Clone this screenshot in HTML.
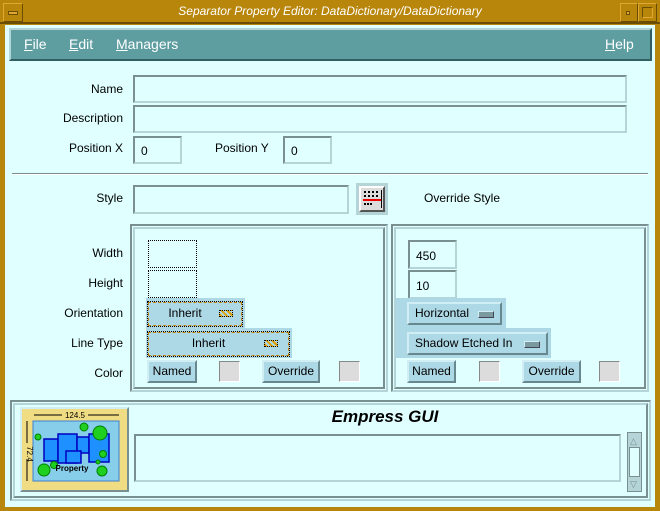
<!DOCTYPE html>
<html><head><style>
*{margin:0;padding:0;box-sizing:border-box}
body{width:660px;height:511px;background:#b8860b;position:relative;overflow:hidden;font-family:"Liberation Sans",sans-serif;font-size:12px;color:#000}
.a{position:absolute}
.lbl{position:absolute;text-align:right;width:120px;left:3px;font-size:12px}
.in{position:absolute;background:#e0ffff;border:2px solid;border-color:#7a8f8f #b4d4d8 #b4d4d8 #7a8f8f}
.btn{position:absolute;background:#add8e6;border:2px solid;border-color:#d0eef4 #688890 #688890 #d0eef4;text-align:center;font-size:12px;line-height:18px}
.sq{position:absolute;width:21px;height:21px;background:#dcdcdc;border:1px solid;border-color:#888 #fff #fff #888}
.dot{position:absolute;border:1px dotted #000;background:#e0ffff}
.grp{position:absolute;border:2px solid;border-color:#7a8f8f #b4d4d8 #b4d4d8 #7a8f8f}
.grp>div{position:absolute;inset:1px;border:2px solid;border-color:#b4d4d8 #7a8f8f #7a8f8f #b4d4d8}
.ind{position:absolute;width:16px;height:7px;border:1px solid;border-color:#d0eef4 #445 #445 #d0eef4;background:#7a9aa0}
.hatch{position:absolute;width:14px;height:7px;border:1px dotted #000;background:repeating-linear-gradient(45deg,#e0a000 0 2px,#add8e6 2px 4px)}
</style></head><body>
<!-- title bar -->
<div class="a" style="left:0;top:0;width:660px;height:24px;background:#b8860b;border-bottom:2px solid #6b4e05"></div>
<div class="a" style="left:3px;top:3px;width:20px;height:19px;border:1px solid #e0a830;border-right-color:#6b4e05;border-bottom-color:#6b4e05"></div>
<div class="a" style="left:8px;top:11px;width:10px;height:4px;background:#e0a830;border:1px solid #6b4e05"></div>
<div class="a" style="left:620px;top:3px;width:18px;height:19px;border:1px solid #e0a830;border-right-color:#6b4e05;border-bottom-color:#6b4e05"></div>
<div class="a" style="left:626px;top:11px;width:4px;height:4px;background:#e0a830;border:1px solid #6b4e05"></div>
<div class="a" style="left:638px;top:3px;width:19px;height:19px;border:1px solid #e0a830;border-right-color:#6b4e05;border-bottom-color:#6b4e05"></div>
<div class="a" style="left:642px;top:7px;width:11px;height:11px;border:1px solid #6b4e05;border-right-color:#e0a830;border-bottom-color:#e0a830"></div>
<div class="a" style="left:0;top:4px;width:660px;text-align:center;color:#fff;font-style:italic;font-size:12px">Separator Property Editor: DataDictionary/DataDictionary</div>
<!-- body -->
<div class="a" style="left:5px;top:25px;width:650px;height:482px;background:#e0ffff"></div>
<!-- menu -->
<div class="a" style="left:9px;top:28px;width:643px;height:33px;background:#5f9ea0;border:2px solid;border-color:#b4d4d8 #2f5f60 #2f5f60 #b4d4d8"></div>
<div class="a" style="left:24px;top:36px;color:#fff;font-size:14px"><u>F</u>ile</div>
<div class="a" style="left:69px;top:36px;color:#fff;font-size:14px"><u>E</u>dit</div>
<div class="a" style="left:116px;top:36px;color:#fff;font-size:14px"><u>M</u>anagers</div>
<div class="a" style="left:605px;top:36px;color:#fff;font-size:14px"><u>H</u>elp</div>
<!-- fields -->
<div class="lbl" style="top:82px">Name</div>
<div class="in" style="left:133px;top:75px;width:494px;height:28px"></div>
<div class="lbl" style="top:111px">Description</div>
<div class="in" style="left:133px;top:105px;width:494px;height:28px"></div>
<div class="lbl" style="top:141px">Position X</div>
<div class="in" style="left:133px;top:136px;width:49px;height:28px;padding:6px 0 0 6px">0</div>
<div class="a" style="left:215px;top:141px">Position Y</div>
<div class="in" style="left:283px;top:136px;width:49px;height:28px;padding:6px 0 0 6px">0</div>
<div class="a" style="left:12px;top:173px;width:636px;height:2px;background:#7a8f8f;border-bottom:1px solid #fff"></div>
<div class="lbl" style="top:191px">Style</div>
<div class="in" style="left:133px;top:185px;width:216px;height:29px"></div>
<div class="a" style="left:356px;top:183px;width:32px;height:32px;background:#b4d4d8;padding:3px">
 <div style="width:26px;height:26px;background:#dcdcdc;border:2px solid;border-color:#fff #555 #555 #fff;position:relative">
  <div style="position:absolute;left:3px;top:3px;width:14px;height:2px;border-top:2px dotted #000"></div>
  <div style="position:absolute;left:3px;top:7px;width:14px;height:2px;border-top:2px dotted #000"></div>
  <div style="position:absolute;left:2px;top:11px;width:18px;height:2px;background:#e00"></div>
  <div style="position:absolute;left:3px;top:15px;width:8px;height:2px;border-top:2px dotted #000"></div>
  <div style="position:absolute;right:1px;top:2px;width:1px;height:18px;background:#000"></div>
 </div></div>
<div class="a" style="left:424px;top:191px">Override Style</div>
<!-- groups -->
<div class="grp" style="left:130px;top:224px;width:258px;height:168px"><div></div></div>
<div class="grp" style="left:391px;top:224px;width:258px;height:168px"><div></div></div>
<div class="lbl" style="top:246px">Width</div>
<div class="lbl" style="top:276px">Height</div>
<div class="lbl" style="top:306px">Orientation</div>
<div class="lbl" style="top:336px">Line Type</div>
<div class="lbl" style="top:366px">Color</div>
<div class="dot" style="left:148px;top:240px;width:49px;height:28px"></div>
<div class="dot" style="left:148px;top:270px;width:49px;height:28px"></div>
<div class="a" style="left:146px;top:298px;width:99px;height:30px;background:#add8e6"></div>
<div class="a" style="left:146px;top:328px;width:146px;height:30px;background:#add8e6"></div>
<div class="a" style="left:148px;top:302px;width:94px;height:24px;border:1px dashed #c08000;outline:1px dotted #000;text-align:center;line-height:21px;padding-right:20px">Inherit</div>
<div class="hatch" style="left:219px;top:310px"></div>
<div class="a" style="left:148px;top:332px;width:141px;height:24px;border:1px dashed #c08000;outline:1px dotted #000;text-align:center;line-height:21px;padding-right:20px">Inherit</div>
<div class="hatch" style="left:264px;top:340px"></div>
<div class="btn" style="left:147px;top:360px;width:50px;height:23px">Named</div>
<div class="sq" style="left:219px;top:361px"></div>
<div class="btn" style="left:262px;top:360px;width:58px;height:23px">Override</div>
<div class="sq" style="left:339px;top:361px"></div>
<div class="in" style="left:408px;top:240px;width:49px;height:29px;padding:7px 0 0 6px">450</div>
<div class="in" style="left:408px;top:270px;width:49px;height:29px;padding:7px 0 0 6px">10</div>
<div class="a" style="left:396px;top:298px;width:110px;height:30px;background:#add8e6"></div>
<div class="a" style="left:396px;top:328px;width:155px;height:30px;background:#add8e6"></div>
<div class="btn" style="left:407px;top:302px;width:95px;height:23px;text-align:left;padding-left:6px">Horizontal</div>
<div class="ind" style="left:478px;top:311px"></div>
<div class="btn" style="left:407px;top:332px;width:141px;height:23px;text-align:left;padding-left:6px">Shadow Etched In</div>
<div class="ind" style="left:524px;top:341px"></div>
<div class="btn" style="left:407px;top:360px;width:49px;height:23px">Named</div>
<div class="sq" style="left:479px;top:361px"></div>
<div class="btn" style="left:522px;top:360px;width:59px;height:23px">Override</div>
<div class="sq" style="left:599px;top:361px"></div>
<!-- bottom -->
<div class="grp" style="left:10px;top:400px;width:641px;height:101px"><div></div></div>
<div class="a" style="left:20px;top:407px;width:109px;height:85px;border:2px solid;border-color:#d0eef4 #7a8f8f #7a8f8f #d0eef4;background:#f0dc82">
<svg width="105" height="81" style="position:absolute;left:0;top:0" font-family="Liberation Sans">
<rect x="11" y="12" width="86" height="60" fill="#87ceeb" stroke="#4080d0"/>
<line x1="12" y1="6" x2="97" y2="6" stroke="#000"/><rect x="40" y="1" width="26" height="9" fill="#f0dc82"/>
<text x="53" y="9" font-size="8" text-anchor="middle">124.5</text>
<line x1="5" y1="12" x2="5" y2="72" stroke="#000"/><rect x="1" y="34" width="8" height="16" fill="#f0dc82"/>
<text x="8" y="42" font-size="8" text-anchor="middle" transform="rotate(90 5 42)">72.4</text>
<g fill="#1e90ff" stroke="#0000c0" stroke-width="1.5">
<rect x="22" y="30" width="14" height="22"/><rect x="36" y="25" width="19" height="29"/><rect x="55" y="28" width="12" height="16"/><rect x="67" y="25" width="20" height="28"/><rect x="44" y="42" width="15" height="12"/></g>
<g fill="#20d020" stroke="#008000"><circle cx="78" cy="24" r="7"/><circle cx="62" cy="18" r="4"/><circle cx="16" cy="28" r="3"/><circle cx="22" cy="61" r="6"/><circle cx="32" cy="56" r="3.5"/><circle cx="81" cy="45" r="3.5"/><circle cx="76" cy="53" r="2"/><circle cx="80" cy="62" r="5"/></g>
<text x="50" y="62" font-size="8" text-anchor="middle" font-weight="bold">Property</text>
</svg></div>
<div class="a" style="left:135px;top:407px;width:500px;text-align:center;font-size:17px;font-weight:bold;font-style:italic">Empress GUI</div>
<div class="in" style="left:134px;top:434px;width:487px;height:48px"></div>
<div class="a" style="left:627px;top:432px;width:15px;height:60px;background:#b4d4d8;border:1px solid #7a8f8f"></div>
<div class="a" style="left:630px;top:436px;font-size:9px;color:#7a8f8f">△</div>
<div class="a" style="left:630px;top:479px;font-size:9px;color:#7a8f8f">▽</div>
<div class="a" style="left:629px;top:447px;width:11px;height:30px;background:#e0ffff;border:1px solid #7a8f8f"></div>
</body></html>
